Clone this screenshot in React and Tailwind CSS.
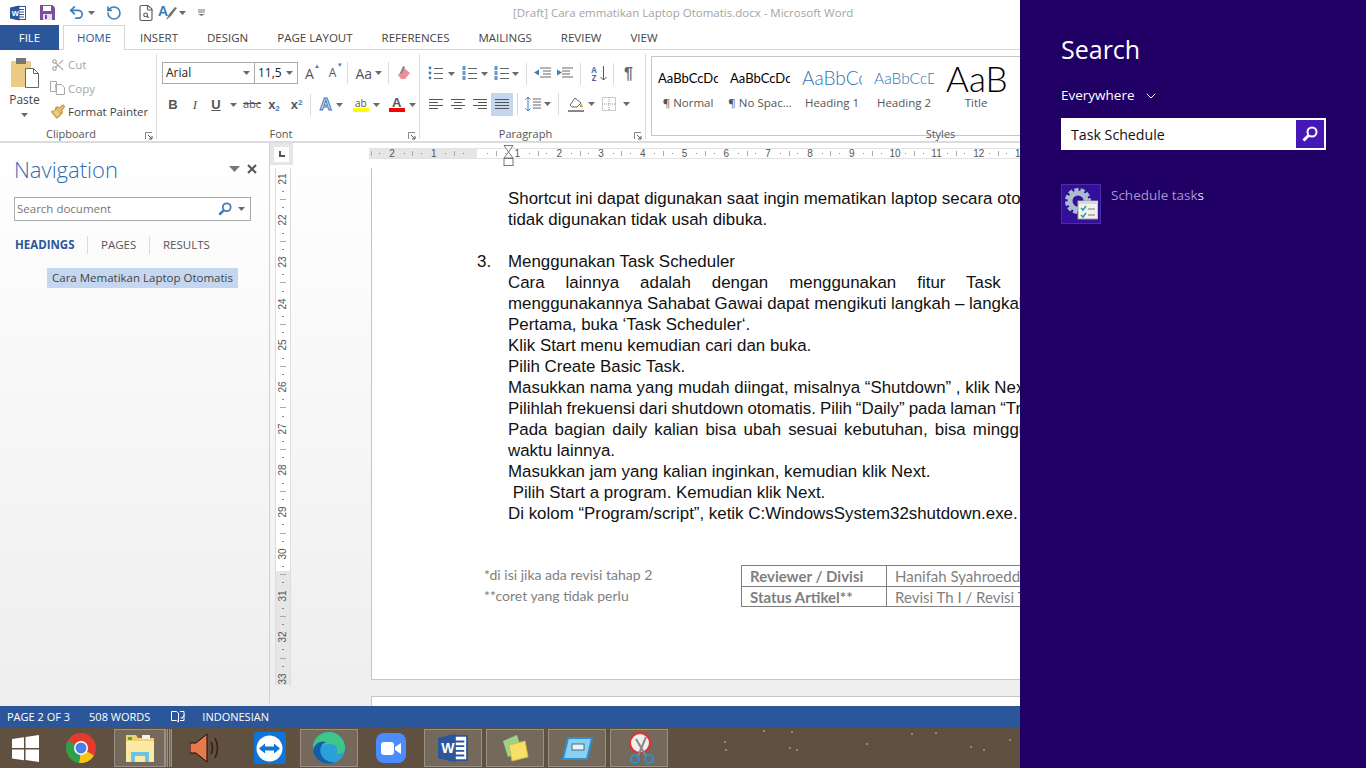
import { Undo2, RotateCcw, Scissors, ChevronDown, FileSearch, Paintbrush } from 'lucide-react';

const UI = 'font-["Open_Sans","Liberation_Sans",sans-serif]';

// small helpers
function Caret({ className = '' }) {
  return (
    <svg width="7" height="4" viewBox="0 0 7 4" className={`shrink-0 ${className}`}>
      <path d="M0 0h7L3.5 4z" fill="#6a6a6a" />
    </svg>
  );
}

function Glass({ size = 14, color = '#3f7cb8' }) {
  return (
    <svg width={size} height={size} viewBox="0 0 16 16" fill="none" stroke={color} className="shrink-0">
      <circle cx="10" cy="6" r="4.500" strokeWidth="2" />
      <path d="M6.500 9.500 1.500 14.500" strokeWidth="3" />
    </svg>
  );
}

function Lines({ rows, w = 15 }) {
  return (
    <svg width={w} height="13" viewBox={`0 0 ${w} 13`}>
      {rows.map((r, i) => (
        <rect key={i} x={r[0]} y={1 + i * 3} width={r[1]} height="1" fill="#555" />
      ))}
    </svg>
  );
}

function WordMark({ size = 16 }) {
  return (
    <svg width={size} height={size} viewBox="0 0 16 16">
      <rect x="6" y="1.5" width="9.5" height="13" fill="#fff" stroke="#2b579a" />
      <path d="M9 4.5h5M9 7h5M9 9.5h5M9 12h5" stroke="#2b579a" />
      <path d="M0 2.5 9.5 0.5v15L0 13.5z" fill="#2b579a" />
      <text x="1.7" y="10.5" fontSize="7.5" fontWeight="700" fill="#fff" fontFamily="Liberation Sans, sans-serif">W</text>
    </svg>
  );
}

function QuickAccess() {
  return (
    <div className="flex items-center h-[25px] shrink-0">
      <div className="ml-[10px]"><WordMark /></div>
      <svg width="15" height="15" viewBox="0 0 15 15" className="ml-[14px]">
        <path d="M0 0h12.5L15 2.5V15H0z" fill="#7b4f9e" />
        <rect x="3" y="1" width="8" height="5" fill="#fff" />
        <rect x="3" y="9" width="9" height="6" fill="#e6dcee" />
        <rect x="5" y="10" width="2" height="4" fill="#7b4f9e" />
      </svg>
      <Undo2 size={17} strokeWidth={2.4} color="#3f7cb8" className="ml-[13px]" />
      <Caret className="ml-[3px]" />
      <RotateCcw size={16} strokeWidth={2.4} color="#3f7cb8" className="ml-[11px]" />
      <FileSearch size={18} strokeWidth={1.5} color="#5a5a5a" className="ml-[15px]" />
      <svg width="19" height="18" viewBox="0 0 19 18" className="ml-[3px]">
        <text x="0" y="12" fontSize="14" fontWeight="700" fill="#3f7cb8" fontFamily="Liberation Sans, sans-serif">A</text>
        <path d="M8 16l3-6 6-7 2 1-6 8z" fill="#777" />
      </svg>
      <Caret className="ml-[2px]" />
      <svg width="7" height="7" viewBox="0 0 7 7" className="ml-[12px]">
        <path d="M0 1h7M0 3h7" stroke="#777" />
        <path d="M0 5h7L3.5 7z" fill="#777" />
      </svg>
      <span className={`ml-[308px] text-[11.5px] text-[#a4a4a4] whitespace-nowrap`}>
        [Draft] Cara emmatikan Laptop Otomatis.docx - Microsoft Word
      </span>
    </div>
  );
}

function Tabs() {
  const tabs = ['INSERT', 'DESIGN', 'PAGE LAYOUT', 'REFERENCES', 'MAILINGS', 'REVIEW', 'VIEW'];
  return (
    <div className="flex h-[25px] shrink-0 border-b border-[#d4d4d4] text-[11.5px] text-[#444]">
      <div className="w-[59px] h-[25px] bg-[#2b579a] text-white flex items-center justify-center">FILE</div>
      <div className="ml-[4px] w-[62px] h-[25px] bg-white border border-b-0 border-[#d4d4d4] text-[#2b579a] flex items-center justify-center">HOME</div>
      <div className="flex items-center gap-[29px] ml-[15px] h-[25px]">
        {tabs.map(t => <span key={t} className="whitespace-nowrap">{t}</span>)}
      </div>
    </div>
  );
}

function Group({ label, width, launcher = true, children, labelPad = 'pr-[14px]' }) {
  return (
    <div className="relative shrink-0 h-[85px] border-r border-[#dcdcdc]" style={{ width }}>
      {children}
      <div className={`absolute bottom-[-2px] left-0 right-0 text-center text-[11px] leading-[14px] text-[#555] ${labelPad}`}>{label}</div>
      {launcher && (
        <svg width="8" height="8" viewBox="0 0 8 8" className="absolute right-[3px] bottom-[-1px]">
          <path d="M.5 7V.5H7" stroke="#888" fill="none" />
          <path d="M3 3l4 4M7 4v3H4" stroke="#555" fill="none" />
        </svg>
      )}
    </div>
  );
}

function Clipboard() {
  return (
    <Group label="Clipboard" width={157}>
      <div className="flex pt-[3px]">
        <div className="w-[49px] flex flex-col items-center">
          <svg width="30" height="32" viewBox="0 0 30 32">
            <rect x="1" y="4" width="20" height="26" fill="#eecb85" />
            <rect x="6" y="1" width="10" height="6" fill="#777" />
            <path d="M15.5 11.5h8l5 5v14h-13z" fill="#fff" stroke="#666" />
            <path d="M23.5 11.5v5h5" fill="none" stroke="#666" />
          </svg>
          <span className="text-[12px] leading-[16px] mt-[3px] text-[#444]">Paste</span>
          <Caret className="mt-[5px]" />
        </div>
        <div className="flex flex-col text-[11.5px] text-[#444] -mt-[4px]">
          <div className="flex items-center h-[23.500px] text-[#a6a6a6]">
            <Scissors size={14} color="#a6a6a6" className="w-[18px] -scale-y-100" /><span className="ml-[1px]">Cut</span>
          </div>
          <div className="flex items-center h-[23.500px] text-[#a6a6a6]">
            <svg width="18" height="14" viewBox="0 0 18 14" fill="none" stroke="#a6a6a6">
              <path d="M1.5.5h6v10h-6zM6.5 3.5h6l3 3v7h-8z" />
            </svg>
            <span className="ml-[1px]">Copy</span>
          </div>
          <div className="flex items-center h-[23.500px] whitespace-nowrap">
            <Paintbrush size={15} color="#c9923e" fill="#eecb85" className="w-[18px]" /><span className="ml-[1px]">Format Painter</span>
          </div>
        </div>
      </div>
    </Group>
  );
}

function Font() {
  return (
    <Group label="Font" width={263}>
      <div className="flex items-center pt-[8px] pl-[5px] text-[12px] text-[#222]">
        <div className="w-[93px] h-[22px] border border-[#ababab] flex items-center justify-between pl-[3px] pr-[4px] bg-white">
          <span>Arial</span><Caret />
        </div>
        <div className="w-[43px] h-[22px] border border-l-0 border-[#ababab] flex items-center justify-between pl-[3px] pr-[4px] bg-white">
          <span>11,5</span><Caret />
        </div>
        <span className="ml-[7px] text-[14px] text-[#555] relative">A<span className="absolute -top-[1px] left-[9px] text-[6px] text-[#3f7cb8]">▲</span></span>
        <span className="ml-[15px] text-[12px] text-[#555] relative">A<span className="absolute -top-[3px] left-[8px] text-[6px] text-[#3f7cb8]">▼</span></span>
        <div className="ml-[11px] h-[22px] border-l border-[#dcdcdc]" />
        <span className="ml-[7px] text-[14px] text-[#555]">Aa</span>
        <Caret className="ml-[3px]" />
        <div className="ml-[6px] h-[22px] border-l border-[#dcdcdc]" />
        <svg width="16" height="16" viewBox="0 0 16 16" className="ml-[7px]">
          <path d="M2 10l6-7 6 5-5 6H5z" fill="#ec8f9a" />
          <path d="M7 1l2 1-3 7-2-1z" fill="#888" />
        </svg>
      </div>
      <div className="flex items-center pt-[8px] pl-[5px] h-[33px] text-[#555]">
        <span className="w-[22px] text-center text-[13px] font-bold font-['Liberation_Sans']">B</span>
        <span className="w-[22px] text-center text-[13px] italic font-['Liberation_Serif']">I</span>
        <span className="w-[20px] text-center text-[13px] font-bold underline font-['Liberation_Sans']">U</span>
        <Caret className="ml-[4px]" />
        <span className="ml-[6px] text-[11px] line-through">abc</span>
        <span className="ml-[7px] text-[13px] font-bold font-['Liberation_Sans']">x<sub className="text-[8px] text-[#3f7cb8]">2</sub></span>
        <span className="ml-[11px] text-[13px] font-bold font-['Liberation_Sans']">x<sup className="text-[8px] text-[#3f7cb8]">2</sup></span>
        <div className="ml-[7px] h-[22px] border-l border-[#dcdcdc]" />
        <span className="ml-[9px] text-[17px] leading-none font-bold text-[#cfe2f5] [-webkit-text-stroke:1px_#3f7cb8] font-['Liberation_Sans']">A</span>
        <Caret className="ml-[4px]" />
        <div className="ml-[10px] flex flex-col items-center w-[16px]">
          <span className="text-[10px] leading-[10px] text-[#555]">ab</span>
          <div className="w-[16px] h-[4px] bg-[#ffff00]" />
        </div>
        <Caret className="ml-[4px]" />
        <div className="ml-[9px] flex flex-col items-center w-[16px]">
          <span className="text-[13px] leading-[11px] font-bold text-[#555] font-['Liberation_Sans']">A</span>
          <div className="w-[16px] h-[4px] bg-[#ff0000]" />
        </div>
        <Caret className="ml-[4px]" />
      </div>
    </Group>
  );
}

function Bullets({ kind }) {
  return (
    <svg width="15" height="15" viewBox="0 0 15 15">
      {[2, 7, 12].map(y => (
        kind === 'dot'
          ? <circle key={y} cx="2" cy={y} r="1.4" fill="#3f7cb8" />
          : <rect key={y} x="0.5" y={y - 2} width="3" height="4" fill="#3f7cb8" opacity=".8" />
      ))}
      {[2, 7, 12].map(y => <rect key={y} x="6" y={y} width="9" height="1" fill="#666" />)}
    </svg>
  );
}

function Paragraph() {
  return (
    <Group label="Paragraph" width={226}>
      <div className="flex items-center pt-[7px] pl-[8px] h-[32px]">
        <Bullets kind="dot" /><Caret className="ml-[5px]" />
        <div className="ml-[7px]"><Bullets kind="num" /></div><Caret className="ml-[4px]" />
        <div className="ml-[6px]"><Bullets kind="num" /></div><Caret className="ml-[3px]" />
        <div className="ml-[7px] h-[22px] border-l border-[#dcdcdc]" />
        <svg width="17" height="13" viewBox="0 0 17 13" className="ml-[7px]">
          <path d="M6 1h11M9 4h8M9 7h8M6 10h11" stroke="#666" />
          <path d="M0 5.5l5-3v6z" fill="#3f7cb8" />
        </svg>
        <svg width="17" height="13" viewBox="0 0 17 13" className="ml-[5px]">
          <path d="M0 1h11M0 4h8M0 7h8M0 10h11" stroke="#666" transform="translate(6)" />
          <path d="M6 5.5l-5-3v6z" fill="#3f7cb8" />
        </svg>
        <div className="ml-[7px] h-[22px] border-l border-[#dcdcdc]" />
        <div className="ml-[8px] w-[10px] text-[8px] leading-[8px] font-bold text-center">
          <div className="text-[#3f7cb8]">A</div><div className="text-[#7b4f9e]">Z</div>
        </div>
        <svg width="7" height="15" viewBox="0 0 7 15" className="ml-[1px]">
          <path d="M3.5 0v14M.5 11l3 3 3-3" stroke="#555" fill="none" />
        </svg>
        <div className="ml-[6px] h-[22px] border-l border-[#dcdcdc]" />
        <span className="ml-[10px] text-[16px] leading-none font-bold text-[#666] font-['Liberation_Sans']">¶</span>
      </div>
      <div className="flex items-center pl-[5px] pt-[6px] h-[30px]">
        <div className="w-[22px] flex justify-center"><Lines rows={[[0, 14], [0, 9], [0, 14], [0, 9]]} w={14} /></div>
        <div className="w-[22px] flex justify-center"><Lines rows={[[0, 14], [3, 8], [0, 14], [3, 8]]} w={14} /></div>
        <div className="w-[22px] flex justify-center"><Lines rows={[[0, 14], [5, 9], [0, 14], [5, 9]]} w={14} /></div>
        <div className="w-[22px] h-[23px] bg-[#c5d7f0] flex items-center justify-center"><Lines rows={[[0, 14], [0, 14], [0, 14], [0, 14]]} w={14} /></div>
        <div className="ml-[4px] h-[22px] border-l border-[#dcdcdc]" />
        <svg width="16" height="16" viewBox="0 0 16 16" className="ml-[7px]">
          <path d="M3 1v14M.5 3.5 3 1l2.5 2.5M.5 12.5 3 15l2.5-2.5" stroke="#3f7cb8" fill="none" />
          <path d="M8 3h8M8 6h8M8 9h8M8 12h8" stroke="#666" />
        </svg>
        <Caret className="ml-[3px]" />
        <div className="ml-[7px] h-[22px] border-l border-[#dcdcdc]" />
        <svg width="18" height="17" viewBox="0 0 18 17" className="ml-[8px]">
          <path d="M3 9l5-7 6 5-4 4H5z" fill="#fff" stroke="#666" />
          <path d="M14 7l2 4-3 0z" fill="#d98a2b" />
          <rect x="1" y="14" width="16" height="2" fill="#888" />
        </svg>
        <Caret className="ml-[3px]" />
        <svg width="14" height="14" viewBox="0 0 14 14" className="ml-[7px]" stroke="#999" strokeDasharray="1 1" fill="none">
          <path d="M.5.5h13v13H.5zM7 0v14M0 7h14" />
        </svg>
        <Caret className="ml-[7px]" />
      </div>
    </Group>
  );
}

function Styles() {
  const items = [
    { s: 'AaBbCcDc', l: '¶ Normal', c: 'text-[13px] text-black' },
    { s: 'AaBbCcDc', l: '¶ No Spac...', c: 'text-[13px] text-black' },
    { s: 'AaBbCcDc', l: 'Heading 1', c: 'text-[19px] text-[#2e74b5] font-light' },
    { s: 'AaBbCcDc', l: 'Heading 2', c: 'text-[15.5px] text-[#2e74b5] font-light' },
    { s: 'AaBbC', l: 'Title', c: 'text-[35px] text-black font-light' },
  ];
  return (
    <Group label="Styles" width={590} launcher={false} labelPad="">
      <div className="ml-[5px] mt-[2px] h-[80px] border border-[#c6c6c6] border-r-0 flex pl-[6px] bg-white font-['Lato']">
        {items.map(it => (
          <div key={it.l} className="w-[72px] shrink-0 flex flex-col items-center pr-[12px]">
            <div className="w-[60px] h-[32px] mt-[4px] flex items-end overflow-hidden whitespace-nowrap">
              <span className={`${it.c} leading-[30px]`}>{it.s}</span>
            </div>
            <span className={`text-[11.5px] leading-[16px] mt-[2px] text-[#555] whitespace-nowrap ${UI}`}>{it.l}</span>
          </div>
        ))}
      </div>
    </Group>
  );
}

function NavPane() {
  return (
    <div className="w-[270px] shrink-0 border-r border-[#d0d0d0] mb-[3px] pl-[14px] pr-[19px]">
      <div className="flex items-center justify-between pt-[10px] h-[41px]">
        <span className="text-[22px] font-light text-[#2b6cb5] leading-none">Navigation</span>
        <div className="flex items-center gap-[7px] -mr-[7px]">
          <svg width="11" height="6" viewBox="0 0 11 6"><path d="M0 0h11L5.500 6z" fill="#777" /></svg>
          <svg width="10" height="10" viewBox="0 0 10 10"><path d="M1 1l8 8M9 1l-8 8" stroke="#555" strokeWidth="2" /></svg>
        </div>
      </div>
      <div className="mt-[13px] h-[24px] w-[237px] border border-[#ababab] bg-white flex items-center pl-[2px] pr-[5px] text-[11.5px] text-[#777]">
        <span className="flex-1">Search document</span>
        <Glass size={14} />
        <Caret className="ml-[6px]" />
      </div>
      <div className="flex items-center mt-[14px] h-[20px] text-[11.5px] text-[#555]">
        <span className="pl-[1px] w-[73px] font-bold text-[#2b579a]">HEADINGS</span>
        <span className="w-[62px] pl-[13px] border-l border-[#dcdcdc]">PAGES</span>
        <span className="pl-[13px] border-l border-[#dcdcdc]">RESULTS</span>
      </div>
      <div className="mt-[13px] ml-[33px] w-[191px] h-[20px] bg-[#c5d7f0] flex items-center pl-[5px] text-[11.5px] text-[#444] whitespace-nowrap">
        Cara Mematikan Laptop Otomatis
      </div>
    </div>
  );
}

function HRuler() {
  const nums = ['2', '1', '', '1', '2', '3', '4', '5', '6', '7', '8', '9', '10', '11', '12', '13'];
  return (
    <div className="flex h-[25px] shrink-0">
      <div className="w-[23px] h-[22px] bg-[#e6e6e6] flex items-center justify-center shrink-0">
        <div className="w-[15px] h-[15px] bg-white flex items-center justify-center">
          <div className="w-[6px] h-[6px] border-l-2 border-b-2 border-[#555]" />
        </div>
      </div>
      <div className="relative ml-[76px] mt-[5px] h-[11px] flex-1 overflow-hidden flex bg-white border-y border-[#e2e2e2]">
        <div className="flex w-[108px] shrink-0 bg-[#e6e6e6]" />
        <div className="absolute left-[1.600px] top-0 h-[9px] flex text-[10px] leading-[9px] text-[#555] font-['Liberation_Sans']">
          {nums.map((n, i) => (
            <div key={i} className="w-[41.8px] shrink-0 flex items-center justify-between">
              <span className="w-[1px] h-[5px] bg-[#aaa]" />
              <span className="w-[1px] h-[1px] bg-[#888]" />
              <span className="w-[8px] text-center">{n}</span>
              <span className="w-[1px] h-[1px] bg-[#888]" />
              <span className="w-0" />
            </div>
          ))}
        </div>
      </div>
      <svg width="11" height="23" viewBox="0 0 11 23" className="absolute left-[503px] top-[145px]">
        <path d="M1 .5h9L5.500 7 1 .5zM5.500 7 10 13H1z" fill="#fff" stroke="#777" />
        <rect x="1" y="13.500" width="9" height="7" fill="#fff" stroke="#777" />
      </svg>
    </div>
  );
}

function VRuler() {
  const nums = [21, 22, 23, 24, 25, 26, 27, 28, 29, 30, 31, 32, 33];
  return (
    <div className="w-[16px] ml-[5px] shrink-0 h-[517px] bg-linear-to-b from-white from-[78%] to-[#e6e6e6] to-[78%] border-x border-[#dcdcdc] text-[10px] text-[#555] font-['Liberation_Sans'] overflow-hidden">
      <div className="flex flex-col -mt-[10.700px]">
        {nums.map(n => (
          <div key={n} className="h-[41.7px] shrink-0 flex flex-col items-center justify-between">
            <span className="w-[6px] h-[1px] bg-[#aaa]" />
            <span className="w-[2px] h-[1px] bg-[#888]" />
            <span className="-rotate-90 h-[10px] leading-[10px]">{n}</span>
            <span className="w-[2px] h-[1px] bg-[#888]" />
            <span className="h-0" />
          </div>
        ))}
      </div>
    </div>
  );
}

function Line({ children, num, spacing = '' }) {
  return (
    <div className={`h-[21px] leading-[21px] whitespace-nowrap flex ${spacing}`}>
      <span className="w-[31px] shrink-0">{num}</span>
      <span>{children}</span>
    </div>
  );
}

function Page() {
  return (
    <div className="ml-[80px] w-[900px] shrink-0">
      <div className="h-[512px] bg-white border-l border-b border-[#c6c6c6] pl-[105px] pt-[20px] overflow-hidden">
        <div className="text-[16.9px] text-[#111] font-['Liberation_Sans']">
          <Line>Shortcut ini dapat digunakan saat ingin mematikan laptop secara otomatis</Line>
          <Line>tidak digunakan tidak usah dibuka.</Line>
          <Line />
          <Line num="3.">Menggunakan Task Scheduler</Line>
          <Line spacing="[word-spacing:16.300px]">Cara lainnya adalah dengan menggunakan fitur Task</Line>
          <Line>menggunakannya Sahabat Gawai dapat mengikuti langkah – langkah</Line>
          <Line>Pertama, buka ‘Task Scheduler‘.</Line>
          <Line>Klik Start menu kemudian cari dan buka.</Line>
          <Line>Pilih Create Basic Task.</Line>
          <Line>Masukkan nama yang mudah diingat, misalnya “Shutdown” , klik Next</Line>
          <Line spacing="[word-spacing:-0.700px]">Pilihlah frekuensi dari shutdown otomatis. Pilih “Daily” pada laman “Trigger”</Line>
          <Line spacing="[word-spacing:2.400px]">Pada bagian daily kalian bisa ubah sesuai kebutuhan, bisa minggu</Line>
          <Line>waktu lainnya.</Line>
          <Line>Masukkan jam yang kalian inginkan, kemudian klik Next.</Line>
          <Line>&nbsp;Pilih Start a program. Kemudian klik Next.</Line>
          <Line>Di kolom “Program/script”, ketik C:WindowsSystem32shutdown.exe.</Line>
        </div>
        <div className="flex mt-[41px] -ml-[105px] font-['Lato'] text-[14px] text-[#7f7f7f]">
          <div className="ml-[112px] w-[257px] shrink-0 leading-[21px] -mt-[1px]">
            <div>*di isi jika ada revisi tahap 2</div>
            <div>**coret yang tidak perlu</div>
          </div>
          <div className="border border-[#7f7f7f] w-[400px] shrink-0 leading-[20px] text-[15px]">
            <div className="flex h-[21px] border-b border-[#7f7f7f]">
              <span className="w-[145px] pl-[8px] font-bold border-r border-[#7f7f7f]">Reviewer / Divisi</span>
              <span className="pl-[8px]">Hanifah Syahroeddin</span>
            </div>
            <div className="flex h-[19px]">
              <span className="w-[145px] pl-[8px] font-bold border-r border-[#7f7f7f]">Status Artikel**</span>
              <span className="pl-[8px]">Revisi Th I / Revisi Th II</span>
            </div>
          </div>
        </div>
      </div>
      <div className="mt-[16px] h-[10px] bg-white border-l border-t border-[#c6c6c6]" />
    </div>
  );
}

function StatusBar() {
  return (
    <div className="h-[22px] shrink-0 bg-[#2b579a] text-white text-[11px] flex items-center pl-[7px] whitespace-nowrap">
      <span>PAGE 2 OF 3</span>
      <span className="ml-[19px]">508 WORDS</span>
      <svg width="15" height="15" viewBox="0 0 15 15" fill="none" stroke="#fff" className="ml-[21px]">
        <path d="M.5 1.500h5l2 1.500v9l-2-1.500h-5zM7.500 3v9" />
        <path d="M9 1.500h4v9h-4M9.500 7l1.500 1.500 2.500-4" />
      </svg>
      <span className="ml-[16px]">INDONESIAN</span>
    </div>
  );
}

function TaskBox({ w, active = true, children }) {
  return (
    <div className={`h-[38px] shrink-0 flex items-center justify-center ${active ? 'bg-[#75695c] border border-[#9a9086]' : ''}`} style={{ width: w }}>
      {children}
    </div>
  );
}

function Taskbar() {
  const specks = [[74, 3], [35, 14], [36, 22], [102, 4], [100, 20], [107, 22], [177, 16], [222, 6], [246, 5], [281, 19], [294, 22], [320, 12]];
  return (
    <div className="relative h-[40px] shrink-0 bg-[#5f5040] flex items-start pt-[1px] overflow-hidden">
      <svg width="330" height="40" viewBox="0 0 330 40" className="absolute left-[690px] top-0">
        {specks.map(([x, y], i) => <circle key={i} cx={x} cy={y} r="1" fill="#a89c8c" />)}
      </svg>
      <div className="w-[50px] h-[38px] flex items-center justify-center shrink-0">
        <svg width="27" height="27" viewBox="0 0 27 27" fill="#fff">
          <path d="M0 4l12-1.700V13H0zM13.500 2.100 27 0v13H13.500zM0 14.500h12v10.700L0 23.500zM13.500 14.500H27V27l-13.500-2z" />
        </svg>
      </div>
      <div className="w-[62px] h-[38px] flex items-center justify-center shrink-0">
        <svg width="30" height="30" viewBox="0 0 30 30">
          <circle cx="15" cy="15" r="15" fill="#e33b2e" />
          <path d="M15 15 28 22.500A15 15 0 0 1 13 29.900z" fill="#f7c518" />
          <path d="M15 15 13 29.900A15 15 0 0 1 2 7.500z" fill="#2fa04a" />
          <circle cx="15" cy="15" r="7" fill="#fff" />
          <circle cx="15" cy="15" r="5.500" fill="#4a7fe8" />
        </svg>
      </div>
      <div className="ml-[2px]">
        <TaskBox w={51}>
          <svg width="32" height="32" viewBox="0 0 32 32">
            <path d="M2 3h10l2 3h16v24H2z" fill="#f0cf6c" />
            <rect x="4" y="5" width="4" height="3" fill="#3fb04a" />
            <rect x="18" y="3" width="8" height="4" fill="#f2f0e4" />
            <rect x="2" y="9" width="28" height="21" fill="#fbe9a4" />
            <path d="M7 20h18v10h-4v-6H11v6H7z" fill="#6cc3e8" />
          </svg>
        </TaskBox>
      </div>
      <div className="w-[3px] h-[38px] bg-[#75695c] border-x border-[#9a9086] shrink-0" />
      <div className="w-[3px] h-[38px] ml-[1px] bg-[#75695c] border-x border-[#9a9086] shrink-0" />
      <div className="w-[67px] h-[38px] flex items-center justify-center shrink-0">
        <svg width="31" height="30" viewBox="0 0 31 30" fill="none">
          <path d="M0 10h6L17 1v28L6 20H0z" fill="#e8784a" stroke="#111" />
          <path d="M21 9q3 6 0 12M25 5q5 10 0 20" stroke="#3a1a10" strokeWidth="1.500" />
        </svg>
      </div>
      <div className="w-[61px] h-[38px] flex items-center justify-center shrink-0">
        <div className="w-[32px] h-[32px] bg-[#0e74d6] rounded-[2px] flex items-center justify-center">
          <svg width="27" height="27" viewBox="0 0 27 27">
            <circle cx="13.500" cy="13.500" r="13" fill="#fff" />
            <path d="M3 13.500l6-5v3h9v-3l6 5-6 5v-3H9v3z" fill="#0e74d6" />
          </svg>
        </div>
      </div>
      <TaskBox w={58}>
        <svg width="32" height="32" viewBox="0 0 32 32">
          <circle cx="16" cy="16" r="16" fill="#2a9fd8" />
          <path d="M16 0a16 16 0 0 1 16 16c0 5-5 7-9 5 3-3 1-9-6-9C9 12 3 17 0 19A16 16 0 0 1 16 0z" fill="#3cc68a" />
          <path d="M0 19c1-7 7-11 13-9-5 2-7 7-5 12 2 6 9 9 15 8a16 16 0 0 1-23-11z" fill="#155da8" />
        </svg>
      </TaskBox>
      <div className="w-[66px] h-[38px] flex items-center justify-center shrink-0">
        <div className="w-[30px] h-[30px] rounded-[8px] bg-[#4a8cff] flex items-center justify-center">
          <svg width="20" height="13" viewBox="0 0 20 13" fill="#fff">
            <rect width="13" height="13" rx="3" />
            <path d="M14 5l6-4v11l-6-4z" />
          </svg>
        </div>
      </div>
      <TaskBox w={58}><WordMark size={30} /></TaskBox>
      <div className="ml-[4px]">
        <TaskBox w={58}>
          <svg width="32" height="30" viewBox="0 0 32 30">
            <path d="M4 8l14-6 5 16-14 6z" fill="#9ad48a" />
            <path d="M10 12l16-4 3 16-16 4z" fill="#f7e06a" stroke="#d8b83c" />
          </svg>
        </TaskBox>
      </div>
      <div className="ml-[4px]">
        <TaskBox w={58}>
          <svg width="32" height="26" viewBox="0 0 32 26">
            <path d="M7 3h24l-5 21H2z" fill="#8ad0f0" stroke="#2f8fd0" strokeWidth="2" />
            <rect x="11" y="9" width="12" height="6" fill="#e8f4fa" stroke="#4a6a80" />
          </svg>
        </TaskBox>
      </div>
      <div className="ml-[4px]">
        <TaskBox w={58}>
          <svg width="34" height="34" viewBox="0 0 34 34" fill="none">
            <circle cx="18" cy="12" r="10" fill="#eee" stroke="#d33" strokeWidth="2" />
            <path d="M14 8l10 17M24 6 16 25" stroke="#888" strokeWidth="2" />
            <circle cx="13" cy="28" r="4" stroke="#2f8fd0" strokeWidth="2" />
            <circle cx="27" cy="28" r="4" stroke="#2f8fd0" strokeWidth="2" />
          </svg>
        </TaskBox>
      </div>
    </div>
  );
}

function SearchCharm() {
  return (
    <div className="w-[346px] shrink-0 h-full bg-[#200064] text-white pl-[41px]">
      <div className="pt-[30px] text-[25px] leading-[38px]">Search</div>
      <div className="flex items-center mt-[16px] h-[22px] text-[13.5px]">
        <span>Everywhere</span>
        <ChevronDown size={16} strokeWidth={1.5} className="ml-[8px] mt-[2px]" />
      </div>
      <div className="mt-[12px] w-[265px] h-[32px] bg-white flex items-center justify-between pl-[10px] pr-[2px]">
        <span className="text-[14.2px] text-[#111] pt-[1px]">Task Schedule</span>
        <div className="w-[28px] h-[28px] bg-[#4617b4] flex items-center justify-center">
          <Glass size={16} color="#fff" />
        </div>
      </div>
      <div className="flex mt-[34px]">
        <div className="w-[40px] h-[40px] bg-[#34109a] border border-[#4b2ba8] flex items-center justify-center">
          <svg width="34" height="34" viewBox="0 0 34 34">
            <circle cx="14" cy="14" r="11" fill="none" stroke="#a9bcd0" strokeWidth="4" strokeDasharray="4 2" />
            <circle cx="14" cy="14" r="8" fill="none" stroke="#a9bcd0" strokeWidth="5" />
            <rect x="14" y="14" width="20" height="18" fill="#f2f2ea" stroke="#999" />
            <rect x="14" y="14" width="20" height="3" fill="#d8d8d8" />
            <path d="M17 21l2 2 3-4M17 28l2 2 3-4" stroke="#1a9bc0" strokeWidth="1.500" fill="none" />
            <path d="M24 22h7M24 28h7" stroke="#777" />
          </svg>
        </div>
        <div className="ml-[10px] -mt-[1px] text-[13.5px] leading-[24px] text-[#a596cc]">
          Schedule task<span className="text-[#e4def2]">s</span>
        </div>
      </div>
    </div>
  );
}

export default function App() {
  return (
    <div className={`w-[1366px] h-[768px] flex overflow-hidden bg-white ${UI}`}>
      <div className="w-[1020px] shrink-0 h-full flex flex-col overflow-hidden">
        <QuickAccess />
        <Tabs />
        <div className="flex h-[93px] pt-[4px] shrink-0 border-b-2 border-[#dcdcdc]">
          <Clipboard />
          <Font />
          <Paragraph />
          <Styles />
        </div>
        <div className="flex flex-1 min-h-0 bg-linear-to-b from-white to-[#eeeeee]">
          <NavPane />
          <div className="flex-1 min-w-0 flex flex-col overflow-hidden">
            <HRuler />
            <div className="flex">
              <VRuler />
              <Page />
            </div>
          </div>
        </div>
        <StatusBar />
        <Taskbar />
      </div>
      <SearchCharm />
    </div>
  );
}
